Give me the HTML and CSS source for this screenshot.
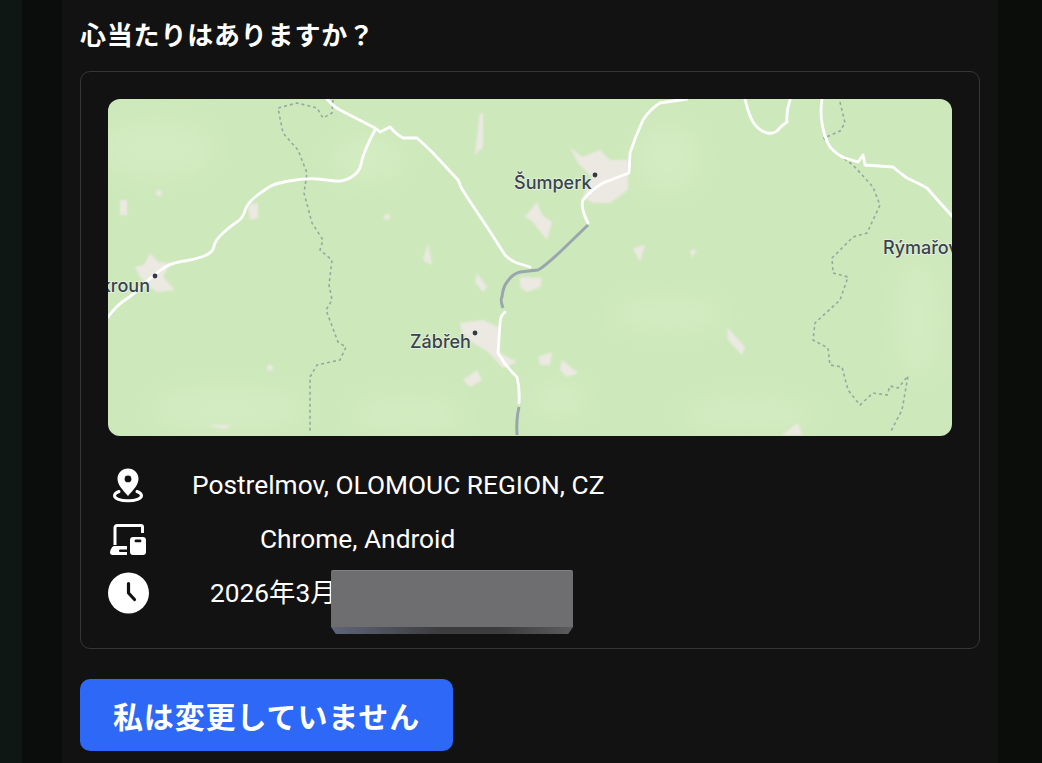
FILE: index.html
```html
<!DOCTYPE html>
<html lang="ja">
<head>
    <meta charset="UTF-8">
    <meta name="viewport" content="width=device-width, initial-scale=1.0">
    <title>心当たりはありますか？</title>
    <link rel="stylesheet" href="styles.css">
</head>
<body>

<div class="rail rail-outer"></div>
<div class="rail rail-inner"></div>

<main class="panel">
    <h2 class="panel-title">心当たりはありますか？</h2>

    <section class="login-card">
        <div class="map">
            <svg class="map-svg" viewBox="0 0 844 337" aria-label="地図">
                <defs>
                    <filter id="soft"><feGaussianBlur stdDeviation="12"/></filter>
                    <filter id="edge"><feGaussianBlur stdDeviation="1"/></filter>
                    <filter id="line"><feGaussianBlur stdDeviation="0.4"/></filter>
                </defs>
                <rect width="844" height="337" fill="#cde8bb"/>

                <!-- forest texture -->
                <g class="forest" filter="url(#soft)">
                    <ellipse cx="50" cy="50" rx="60" ry="30"/>
                    <ellipse cx="260" cy="60" rx="40" ry="25"/>
                    <ellipse cx="120" cy="310" rx="80" ry="25"/>
                    <ellipse cx="300" cy="315" rx="60" ry="20"/>
                    <ellipse cx="560" cy="215" rx="60" ry="18"/>
                    <ellipse cx="640" cy="315" rx="70" ry="18"/>
                    <ellipse cx="810" cy="220" rx="24" ry="60"/>
                    <ellipse cx="560" cy="60" rx="35" ry="35"/>
                    <ellipse cx="450" cy="300" rx="30" ry="20"/>
                </g>

                <!-- built-up areas -->
                <g class="town" filter="url(#edge)">
                    <polygon points="27,168 36,166 42,154 50,163 62,164 55,178 67,191 49,193 42,188 32,178"/>
                    <polygon points="352,224 375,221 390,228 392,254 409,263 395,269 380,253 365,244 354,234"/>
                    <polygon points="355,281 369,271 374,281 362,288"/>
                    <polygon points="462,48 474,58 492,51 502,61 520,61 520,91 502,104 485,104 475,98 484,78 470,64"/>
                    <polygon points="417,118 429,103 434,116 444,123 439,141 425,123"/>
                    <polygon points="525,149 537,146 532,163"/>
                    <polygon points="582,151 589,151 584,159"/>
                    <polygon points="619,228 637,248 634,256 620,241"/>
                    <polygon points="430,258 444,253 442,266 432,266"/>
                    <polygon points="454,261 470,274 459,278 452,271"/>
                    <polygon points="674,336 690,324 694,336"/>
                    <polygon points="412,178 434,179 432,188 419,193 412,188"/>
                    <polygon points="12,101 19,101 19,116 12,116"/>
                    <polygon points="140,106 150,104 150,119 142,121"/>
                    <polygon points="315,161 320,144 324,166"/>
                    <polygon points="369,174 379,188 375,193 367,183"/>
                    <polygon points="372,14 375,14 375,48 367,56"/>
                    <circle cx="51" cy="94" r="3"/>
                    <circle cx="279" cy="118" r="3"/>
                    <circle cx="162" cy="269" r="3"/>
                    <polygon points="100,326 124,326 116,330"/>
                </g>

                <!-- borders -->
                <g class="border-line">
                    <polyline points="225,1 224,14 215,19 209,9 189,4 170,9 175,34 190,51 199,74 196,94 204,124 215,141 212,151 224,161 221,186 224,201 218,211 230,243 238,248 232,261 209,266 202,278 202,334"/>
                    <polyline points="732,3 737,24 732,32 716,39 724,51 745,66 765,88 772,106 759,134 745,138 724,159 725,174 740,178 732,201 707,224 705,241 720,249 722,266 734,268 740,291 752,306 765,294 779,296 782,287 790,289 800,277 794,311 782,334"/>
                </g>

                <!-- roads -->
                <g class="road" filter="url(#line)">
                    <path d="M0,218 Q9,206 17,201 Q25,196 33.500,187.500 Q42,179 52,171.500 Q62,164 73.500,162.500 Q85,161 95,157.500 Q105,154 106,147.500 Q107,141 115.500,133.500 Q124,126 129.500,122.500 Q135,119 137,111.500 Q139,104 149,96.500 Q159,89 164,86.500 Q169,84 184,81.500 Q199,79 209,80 Q219,81 227,82 Q235,83 243.500,78 Q252,73 253.500,63.500 Q255,54 267,31"/>
                    <path d="M219,0 Q226,8 232,11 L267,29 L272,33 L282,28 Q289,36 295,39 L309,39 Q318,47 325,54 L350,81 Q353,90 359,98 L379,128 Q388,142 397,156 Q403,162 409,164 L422,168"/>
                    <path d="M397,213 Q392,217 392,224 L390,254 Q398,268 409,278 Q412,290 411,304"/>
                    <path d="M480,124 Q472,108 475,101 Q484,90 495,84 Q510,78 521,74 L522,54 Q528,36 535,21 Q542,10 552,4 L579,0"/>
                    <path d="M637,0 Q640,14 645,23 Q651,32 659,34 Q665,35 669,32 Q674,26 679,23 Q678,12 682,1"/>
                    <path d="M714,0 Q712,14 714,24 Q716,38 722,48 Q729,56 737,59 L750,63 L755,56 L757,66 L785,68 Q792,74 799,79 Q810,84 819,89 Q832,104 844,117"/>
                </g>
                <g class="motorway" filter="url(#line)">
                    <path d="M395,209 Q392,200 394,198 Q395,188 399,183 Q404,175 412,173 L430,171 Q436,168 452,153 L480,126"/>
                    <path d="M411,308 Q408,320 409,336"/>
                </g>

                <!-- places -->
                <circle class="place-dot" cx="487" cy="76" r="2.400"/>
                <circle class="place-dot" cx="367" cy="234" r="2.400"/>
                <circle class="place-dot" cx="47" cy="177" r="2.400"/>
                <text class="place" x="406" y="90">Šumperk</text>
                <text class="place" x="302" y="249">Zábřeh</text>
                <text class="place" x="775" y="155">Rýmařov</text>
                <text class="place" x="42" y="193" text-anchor="end">Lanškroun</text>
            </svg>
        </div>

        <ul class="meta-list">
            <li class="meta-row">
                <svg class="meta-icon" viewBox="0 0 42 42">
                    <path fill-rule="evenodd" fill="#fff" d="M20 4.500c-6 0-10.500 4.600-10.500 10.300 0 6.200 5.400 11.400 10.500 17.200 5.100-5.800 10.500-11 10.500-17.200C30.500 9.100 26 4.500 20 4.500zm0 7a3.400 3.400 0 1 1 0 6.800 3.400 3.400 0 0 1 0-6.800z"/>
                    <path fill="none" stroke="#fff" stroke-width="3" stroke-linecap="round" d="M11 27.500C8 28.600 6.500 30 6.500 31.700c0 2.900 6 5 13.500 5s13.500-2.100 13.500-5c0-1.700-1.500-3.100-4.500-4.200"/>
                </svg>
                <span class="meta-text meta-place">Postrelmov, OLOMOUC REGION, CZ</span>
            </li>
            <li class="meta-row">
                <svg class="meta-icon" viewBox="0 0 42 42">
                    <path fill="none" stroke="#fff" stroke-width="3" d="M7 27V9.500C7 8.500 8 7.500 9 7.500h24c1 0 1.500.5 1.500 1.500v6"/>
                    <path fill="#fff" d="M2 34.500C2 32 3.500 29.500 5.500 28h13.500v3.500h-6.500c-1 0-1.500.5-1.500 1.200s.5 1.300 1.500 1.300H19V37H4.500C3 37 2 36 2 34.500z"/>
                    <path fill-rule="evenodd" fill="#fff" d="M22 22c0-1.700 1.300-3 3-3h10c1.700 0 3 1.300 3 3v12c0 1.700-1.300 3-3 3H25c-1.700 0-3-1.300-3-3zm6-.5c-.8 0-1.400.6-1.400 1.400s.6 1.400 1.400 1.400h4c.8 0 1.400-.6 1.400-1.400s-.6-1.400-1.400-1.400z"/>
                </svg>
                <span class="meta-text meta-device">Chrome, Android</span>
            </li>
            <li class="meta-row">
                <svg class="meta-icon" viewBox="0 0 42 42">
                    <circle cx="20.500" cy="21" r="20.500" fill="#fff"/>
                    <path fill="none" stroke="#121212" stroke-width="3.200" stroke-linecap="round" stroke-linejoin="round" d="M20.500 11.500V21l6 6.500"/>
                </svg>
                <span class="meta-text meta-time">2026年3月</span>
                <div class="redaction"></div>
            </li>
        </ul>
    </section>

    <button class="confirm-btn" type="button">私は変更していません</button>
</main>

<div class="rail rail-right"></div>

</body>
</html>
```

FILE: styles.css
```css
html, body {
    height: 100%;
}
body {
    margin: 0;
    display: flex;
    height: 763px;
    overflow: hidden;
    background-color: #0b0d0b;
    color: #fff;
    font-family: Roboto, "Noto Sans CJK JP", sans-serif;
}
.rail {
    flex: none;
}
.rail-outer {
    width: 22px;
    background-color: #0f1714;
}
.rail-inner {
    width: 40px;
    background-color: #0a0d0b;
}
.rail-right {
    width: 44px;
    background-color: #0b0d0b;
}
.panel {
    flex: none;
    width: 900px;
    padding: 0 18px;
    background-color: #121212;
}
.panel-title {
    margin: 0;
    height: 71px;
    padding-bottom: 4px;
    box-sizing: border-box;
    display: flex;
    align-items: center;
    font-family: "Noto Sans CJK JP", sans-serif;
    font-size: 26px;
    font-weight: 700;
    letter-spacing: 0.8px;
}
.login-card {
    box-sizing: border-box;
    height: 578px;
    padding: 27px 27px 29px;
    border: 1px solid #363636;
    border-radius: 10px;
}
.map {
    height: 337px;
    border-radius: 12px;
    overflow: hidden;
}
.map-svg {
    display: block;
    width: 844px;
    height: 337px;
}
.forest ellipse {
    fill: #d3ecc1;
}
.town polygon, .town circle {
    fill: #ece9e3;
}
.border-line polyline {
    fill: none;
    stroke: #97a8a2;
    stroke-width: 1.6;
    stroke-dasharray: 3 3;
}
.road path {
    fill: none;
    stroke: #fff;
    stroke-width: 2.800;
    stroke-linejoin: round;
    stroke-linecap: round;
}
.motorway path {
    fill: none;
    stroke: #9aa6ad;
    stroke-width: 3;
    stroke-linejoin: round;
}
.place-dot {
    fill: #333a45;
}
.place {
    font-family: Inter, sans-serif;
    font-size: 18px;
    font-weight: 500;
    fill: #3a4250;
    stroke: #e6f2dc;
    stroke-width: 1.500px;
    paint-order: stroke;
}
.meta-list {
    list-style: none;
    margin: 22px 0 0;
    padding: 0;
}
.meta-row {
    position: relative;
    display: flex;
    align-items: center;
    height: 54px;
}
.meta-icon {
    flex: none;
    width: 42px;
    height: 42px;
}
.meta-text {
    font-size: 26.300px;
    line-height: 1;
    color: #fff;
}
.meta-place {
    margin-left: 42px;
}
.meta-device {
    margin-left: 110px;
}
.meta-time {
    margin-left: 60px;
}
.redaction {
    position: absolute;
    left: 223px;
    top: 4px;
    width: 242px;
    height: 57px;
    background-color: #6e6e70;
    border-top: 1px solid #808082;
    box-sizing: border-box;
    border-radius: 2px 2px 0 0;
}
.redaction::after {
    content: "";
    position: absolute;
    left: 0;
    right: 0;
    top: 56px;
    height: 7px;
    background: linear-gradient(90deg, #5f6579, #3c3c3e 45%, #3c3c3e 70%, #5c5c5e);
    clip-path: polygon(0 0, 100% 0, 98% 100%, 2% 100%);
}
.confirm-btn {
    display: block;
    margin-top: 30px;
    width: 373px;
    height: 72px;
    padding: 0;
    border: none;
    border-radius: 10px;
    background-color: #2d68f6;
    color: #fff;
    font-family: "Noto Sans CJK JP", sans-serif;
    font-size: 30px;
    font-weight: 700;
    letter-spacing: 0.9px;
    cursor: pointer;
}
```
